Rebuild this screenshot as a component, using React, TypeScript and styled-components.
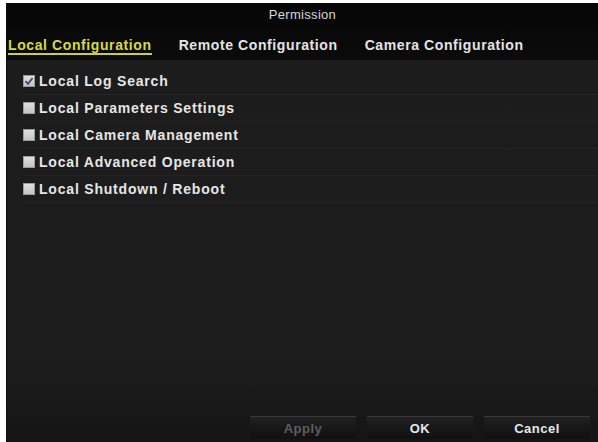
import styled, { createGlobalStyle } from "styled-components";

const GlobalStyle = createGlobalStyle`
  html, body {
    margin: 0;
    padding: 0;
    background: #ffffff;
  }
  body {
    font-family: "Liberation Sans", Arial, sans-serif;
  }
`;

const tabs = ["Local Configuration", "Remote Configuration", "Camera Configuration"];

const permissions = [
  { label: "Local Log Search", checked: true },
  { label: "Local Parameters Settings", checked: false },
  { label: "Local Camera Management", checked: false },
  { label: "Local Advanced Operation", checked: false },
  { label: "Local Shutdown / Reboot", checked: false },
];

const App: React.FC = () => {
  return (
    <>
      <GlobalStyle />
      <Window>
        <Header>
          <Title>Permission</Title>
          <TabBar>
            {tabs.map((t, i) => (
              <Tab key={t} $active={i === 0}>
                {t}
              </Tab>
            ))}
          </TabBar>
        </Header>
        <List>
          {permissions.map((p) => (
            <Row key={p.label}>
              <Box $checked={p.checked}>
                {p.checked && (
                  <svg width="10" height="10" viewBox="0 0 10 10">
                    <path d="M1.5 5.2 L4 7.8 L8.6 2" stroke="#3a4a6a" strokeWidth="1.8" fill="none" />
                  </svg>
                )}
              </Box>
              <Label>{p.label}</Label>
            </Row>
          ))}
        </List>
        <Footer>
          <Button $disabled>Apply</Button>
          <Button>OK</Button>
          <Button>Cancel</Button>
        </Footer>
      </Window>
    </>
  );
};

export default App;

const Window = styled.div`
  margin: 3px 0 0 6px;
  width: 592px;
  height: 439px;
  display: flex;
  flex-direction: column;
  background: linear-gradient(#1c1c1c, #1d1d1d 80%, #151515);
  border-left: 1px solid #0c0c0c;
  box-sizing: border-box;
  overflow: hidden;
`;

const Header = styled.div`
  height: 57px;
  background: linear-gradient(#060606, #0b0b0b);
  display: flex;
  flex-direction: column;
`;

const Title = styled.div`
  height: 26px;
  line-height: 24px;
  text-align: center;
  color: #d8d8d8;
  font-size: 13px;
  letter-spacing: 0.3px;
`;

const TabBar = styled.div`
  display: flex;
  gap: 27px;
  padding: 8px 0 0 1px;
`;

const Tab = styled.div<{ $active?: boolean }>`
  font-size: 14px;
  font-weight: bold;
  line-height: 16px;
  letter-spacing: 0.6px;
  color: ${(p) => (p.$active ? "#d4dc3c" : "#e4e4e4")};
  border-bottom: 2px solid ${(p) => (p.$active ? "#c8d040" : "transparent")};
`;

const List = styled.div`
  flex: 1;
  display: flex;
  flex-direction: column;
  padding: 8px 0 0 16px;
`;

const Row = styled.div`
  display: flex;
  align-items: center;
  gap: 4px;
  height: 26px;
  border-bottom: 1px solid #242424;
`;

const Box = styled.div<{ $checked?: boolean }>`
  width: 12px;
  height: 12px;
  box-sizing: border-box;
  background: linear-gradient(#e0e0e0, #c4c4c4);
  border: 1px solid #9a9a9a;
  display: flex;
  align-items: center;
  justify-content: center;
`;

const Label = styled.div`
  font-size: 14px;
  font-weight: bold;
  color: #e6e6e6;
  letter-spacing: 0.8px;
`;

const Footer = styled.div`
  display: flex;
  justify-content: flex-end;
  gap: 11px;
  padding: 0 8px 0 0;
  height: 23px;
  margin-bottom: 3px;
`;

const Button = styled.div<{ $disabled?: boolean }>`
  width: 106px;
  height: 23px;
  box-sizing: border-box;
  border-top: 1px solid #3a3a3a;
  background: linear-gradient(#202020, #101010);
  display: flex;
  align-items: center;
  justify-content: center;
  font-size: 13px;
  font-weight: bold;
  letter-spacing: 0.5px;
  color: ${(p) => (p.$disabled ? "#5e5e5e" : "#e8e8e8")};
`;
